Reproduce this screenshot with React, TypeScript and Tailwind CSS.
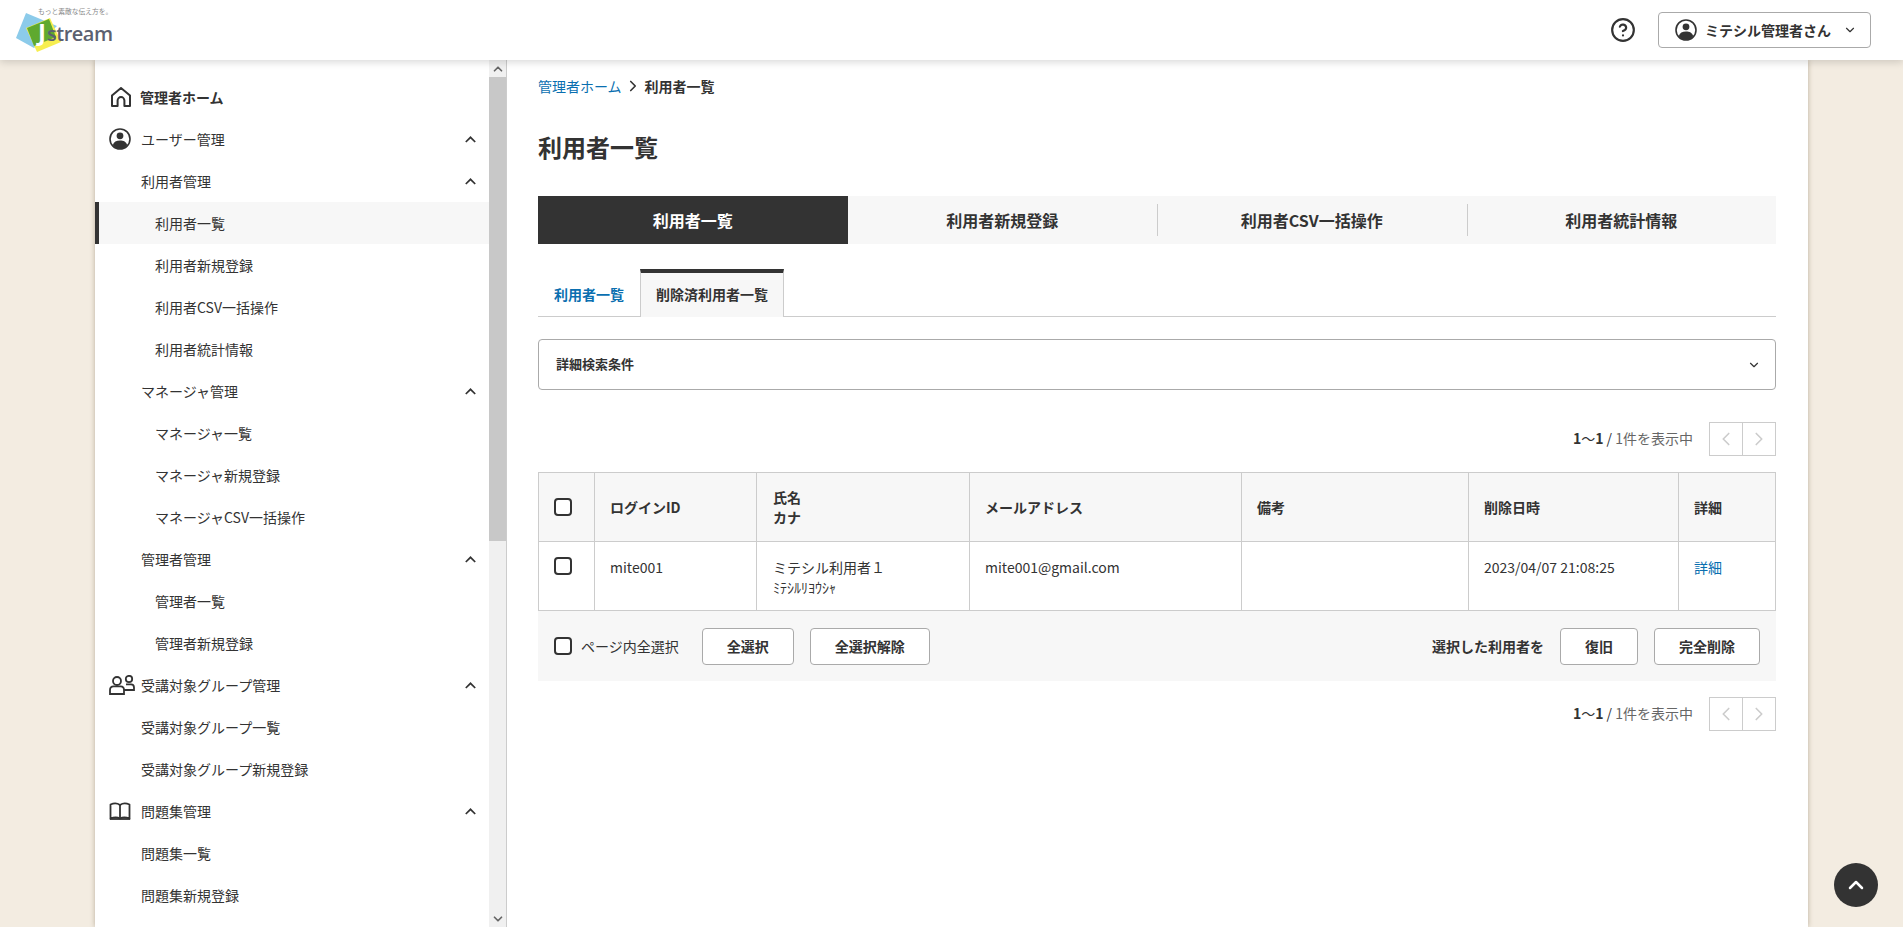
import { ChevronDown, ChevronLeft, ChevronRight, ChevronUp, CircleHelp } from "lucide-react";

type NavItem = {
  label: string;
  depth: 0 | 1 | 2;
  icon?: "home" | "user" | "group" | "book";
  bold?: boolean;
  open?: boolean;
  active?: boolean;
};

const navItems: NavItem[] = [
  { label: "管理者ホーム", depth: 0, icon: "home", bold: true },
  { label: "ユーザー管理", depth: 0, icon: "user", open: true },
  { label: "利用者管理", depth: 1, open: true },
  { label: "利用者一覧", depth: 2, active: true },
  { label: "利用者新規登録", depth: 2 },
  { label: "利用者CSV一括操作", depth: 2 },
  { label: "利用者統計情報", depth: 2 },
  { label: "マネージャ管理", depth: 1, open: true },
  { label: "マネージャ一覧", depth: 2 },
  { label: "マネージャ新規登録", depth: 2 },
  { label: "マネージャCSV一括操作", depth: 2 },
  { label: "管理者管理", depth: 1, open: true },
  { label: "管理者一覧", depth: 2 },
  { label: "管理者新規登録", depth: 2 },
  { label: "受講対象グループ管理", depth: 0, icon: "group", open: true },
  { label: "受講対象グループ一覧", depth: 1 },
  { label: "受講対象グループ新規登録", depth: 1 },
  { label: "問題集管理", depth: 0, icon: "book", open: true },
  { label: "問題集一覧", depth: 1 },
  { label: "問題集新規登録", depth: 1 },
];

const topTabs = ["利用者一覧", "利用者新規登録", "利用者CSV一括操作", "利用者統計情報"];

function UserIcon() {
  return (
    <svg width="22" height="22" viewBox="0 0 22 22" fill="none">
      <circle cx="11" cy="11" r="10" stroke="#333" strokeWidth="1.6" />
      <circle cx="11" cy="7.800" r="3.400" fill="#333" />
      <path d="M3.800 17.200C4.600 14 7.500 12.600 11 12.600s6.400 1.400 7.200 4.600A10 10 0 0 1 11 21a10 10 0 0 1-7.200-3.800Z" fill="#333" />
    </svg>
  );
}

function NavIcon({ icon }: { icon: NavItem["icon"] }) {
  if (icon === "home") {
    return (
      <svg width="20" height="20" viewBox="0 0 20 20" fill="none" className="ml-[2px]">
        <path
          d="M1 8.500 10 1l9 7.500V19h-5.600v-5.500a3.400 3.400 0 0 0-6.800 0V19H1Z"
          stroke="#333"
          strokeWidth="2"
          strokeLinejoin="round"
        />
      </svg>
    );
  }
  if (icon === "user") return <UserIcon />;
  if (icon === "group") {
    return (
      <svg width="26" height="20" viewBox="0 0 26 20" fill="none" stroke="#333" strokeWidth="1.800">
        <circle cx="8" cy="6" r="4" />
        <circle cx="20" cy="4" r="3.200" />
        <path d="M1 19v-4c0-2.400 1.600-3.600 3.600-3.600h7c2 0 3.400 1.200 3.400 3.600v4Z" />
        <path d="M15 15h10v-2.500c0-2-1.400-3.100-3-3.100h-5" />
      </svg>
    );
  }
  if (icon === "book") {
    return (
      <svg width="22" height="18" viewBox="0 0 22 18" fill="none" stroke="#333" strokeWidth="1.800" strokeLinejoin="round">
        <path d="M1.500 16.500V2.500C5 1 8.500 1.200 11 3c2.500-1.800 6-2 9.500-.5v14c-3.500-1.400-7-1.400-9.500 0-2.500-1.400-6-1.400-9.500 0Z" />
        <path d="M11 3v13.500" />
        <path d="M.8 17h20.400" />
      </svg>
    );
  }
  return null;
}

function SmallChevronUp() {
  return (
    <svg width="11" height="7" viewBox="0 0 11 7" fill="none">
      <path d="M.8 6 5.500 1.300 10.200 6" stroke="#333" strokeWidth="1.700" />
    </svg>
  );
}

function Logo() {
  return (
    <div className="relative h-[60px] w-[130px] shrink-0">
      <svg width="70" height="60" viewBox="0 0 70 60" className="absolute left-0 top-0">
        <polygon points="26,13 57,26 34,48 16,38" fill="#8ccbea" />
        <polygon points="50,18 61,42 37,52 26,28" fill="#f7ee4f" />
        <polygon points="27,28 49,19 56,37 34,46" fill="#5fa92f" />
      </svg>
      <span className="absolute left-[38px] top-[9px] origin-top-left scale-75 whitespace-nowrap text-[9px] leading-[8px] text-[#888]">
        もっと素敵な伝え方を。
      </span>
      <span className="absolute left-[38px] top-[17px] font-['Open_Sans',sans-serif] text-[24px] font-bold leading-[30px] text-white">
        J
      </span>
      <span className="absolute left-[47px] top-[19px] font-['Open_Sans',sans-serif] text-[20px] font-semibold leading-[30px] tracking-[-0.5px] text-[#5b6070]">
        stream
      </span>
    </div>
  );
}

function Pagination() {
  return (
    <div className="flex h-[34px] items-center justify-end">
      <p className="mr-4 pb-[2px] text-sm text-[#666]">
        <span className="font-bold text-[#333]">
          1<span className="font-normal">〜</span>1
        </span>{" "}
        <span className="text-[#333]">/</span> 1件を表示中
      </p>
      <div className="flex h-[34px] border border-[#ccc]">
        <span className="flex w-[33px] items-center justify-center border-r border-[#ccc]">
          <ChevronLeft size={22} strokeWidth={1.800} className="text-[#ccc]" />
        </span>
        <span className="flex w-[32px] items-center justify-center">
          <ChevronRight size={22} strokeWidth={1.800} className="text-[#ccc]" />
        </span>
      </div>
    </div>
  );
}

function Checkbox() {
  return (
    <input
      type="checkbox"
      className="block h-[18px] w-[18px] appearance-none rounded-[4px] border-2 border-[#333] bg-white"
    />
  );
}

function ActionButton({ children }: { children: string }) {
  return (
    <button
      type="button"
      className="h-[37px] rounded-[4px] border border-[#aaa] bg-white px-6 text-sm font-bold text-[#333]"
    >
      {children}
    </button>
  );
}

export default function App() {
  return (
    <div className="flex h-screen flex-col overflow-hidden bg-[#f3ece1] font-['Noto_Sans_CJK_JP','Noto_Sans',sans-serif] text-sm text-[#333]">
      <header className="relative z-10 flex h-[60px] shrink-0 items-center justify-between bg-white pr-[32px] shadow-[0_2px_8px_rgba(0,0,0,0.16)]">
        <Logo />
        <div className="flex items-center">
          <CircleHelp size={26} strokeWidth={2} className="mr-[22px] text-[#333]" />
          <button
            type="button"
            className="flex h-[36px] w-[213px] items-center rounded-[4px] border border-[#aaa] bg-white pl-[16px] text-sm font-bold"
          >
            <UserIcon />
            <span className="ml-[8px]">ミテシル管理者さん</span>
            <ChevronDown size={14} strokeWidth={2} className="ml-[12px]" />
          </button>
        </div>
      </header>

      <div className="relative mx-auto flex min-h-0 w-[1713px] flex-1 bg-white shadow-[0_0_5px_rgba(80,60,30,0.35)]">
        <aside className="flex w-[412px] shrink-0 border-r border-[#ccc]">
          <nav className="min-w-0 flex-1 overflow-hidden pt-4">
            {navItems.map((item) => (
              <a
                key={item.label}
                href="#"
                className={`flex h-[42px] items-center pr-[13px] ${item.active ? "border-l-4 border-[#333] bg-[#f7f7f7] pl-[56px]" : ""} ${
                  !item.active && item.depth === 2 ? "pl-[60px]" : ""
                } ${!item.active && item.depth === 1 ? "pl-[46px]" : ""} ${item.depth === 0 ? "pl-[14px]" : ""}`}
              >
                {item.icon && (
                  <span className={`flex shrink-0 items-center ${item.icon === "home" ? "w-[31px]" : "w-[32px]"}`}>
                    <NavIcon icon={item.icon} />
                  </span>
                )}
                <span className={`flex-1 ${item.bold ? "font-bold" : ""}`}>{item.label}</span>
                {item.open && <SmallChevronUp />}
              </a>
            ))}
          </nav>
          <div className="flex w-[17px] shrink-0 flex-col bg-[#f0f0f0]">
            <div className="flex h-[17px] items-center justify-center bg-[#f1f1f1]">
              <ChevronUp size={14} strokeWidth={3} className="text-[#666]" />
            </div>
            <div className="h-[464px] bg-[#c8c8c8]" />
            <div className="flex-1" />
            <div className="flex h-[17px] items-center justify-center">
              <ChevronDown size={14} strokeWidth={3} className="text-[#666]" />
            </div>
          </div>
        </aside>

        <main className="min-w-0 flex-1 pl-[31px] pr-[32px] pt-4">
          <nav className="flex h-5 items-center text-sm">
            <a href="#" className="text-[#0a6fb0]">
              管理者ホーム
            </a>
            <ChevronRight size={18} strokeWidth={2.200} className="ml-[2px] mr-[3px]" />
            <span className="font-bold">利用者一覧</span>
          </nav>

          <h1 className="mt-[33px] text-2xl font-bold leading-9">利用者一覧</h1>

          <div className="mt-[31px] grid h-12 grid-cols-4 bg-[#f7f7f7]">
            {topTabs.map((tab, index) => (
              <div
                key={tab}
                className={`flex items-center justify-center text-base font-bold ${
                  index === 0 ? "bg-[#333] text-white" : ""
                } ${index > 1 ? "relative" : ""}`}
              >
                {index > 1 && <span className="absolute left-0 top-2 h-8 w-px bg-[#ccc]" />}
                {tab}
              </div>
            ))}
          </div>

          <div className="mt-[25px] flex h-12 border-b border-[#ccc]">
            <a href="#" className="flex w-[102px] items-center justify-center pt-[2px] font-bold text-[#0a6fb0]">
              利用者一覧
            </a>
            <div className="-mb-px flex w-[144px] items-center justify-center border-x border-t-4 border-[#ccc] border-t-[#333] bg-[#f7f7f7] pb-[2px] font-bold">
              削除済利用者一覧
            </div>
          </div>

          <div className="mt-[22px] flex h-[51px] items-center justify-between rounded-[4px] border border-[#aaa] pl-[17px] pr-[14px] text-[13px] font-bold">
            詳細検索条件
            <ChevronDown size={14} strokeWidth={2} />
          </div>

          <div className="mt-[32px]">
            <Pagination />
          </div>

          <table className="mt-4 w-full table-fixed border-collapse border border-[#ccc]">
            <colgroup>
              <col className="w-[56px]" />
              <col className="w-[162px]" />
              <col className="w-[213px]" />
              <col className="w-[272px]" />
              <col className="w-[227px]" />
              <col className="w-[210px]" />
              <col />
            </colgroup>
            <thead>
              <tr className="h-[69px] bg-[#f7f7f7] text-left">
                <th className="border border-[#ccc] px-[15px] align-middle">
                  <Checkbox />
                </th>
                <th className="border border-[#ccc] px-[15px]">ログインID</th>
                <th className="border border-[#ccc] px-[16px] leading-[20px]">
                  氏名
                  <br />
                  カナ
                </th>
                <th className="border border-[#ccc] px-[15px]">メールアドレス</th>
                <th className="border border-[#ccc] px-[15px]">備考</th>
                <th className="border border-[#ccc] px-[15px]">削除日時</th>
                <th className="border border-[#ccc] px-[15px]">詳細</th>
              </tr>
            </thead>
            <tbody>
              <tr className="h-[69px] align-top">
                <td className="border border-[#ccc] px-[15px] pt-[15px]">
                  <Checkbox />
                </td>
                <td className="border border-[#ccc] px-[15px] pt-[15px]">mite001</td>
                <td className="border border-[#ccc] px-[16px] pt-[15px]">
                  ミテシル利用者１
                  <br />
                  <span className="text-[14px] leading-[18px]">ﾐﾃｼﾙﾘﾖｳｼｬ</span>
                </td>
                <td className="border border-[#ccc] px-[15px] pt-[15px]">mite001@gmail.com</td>
                <td className="border border-[#ccc] px-[15px] pt-[15px]" />
                <td className="border border-[#ccc] px-[15px] pt-[15px]">2023/04/07 21:08:25</td>
                <td className="border border-[#ccc] px-[15px] pt-[15px]">
                  <a href="#" className="text-[#0a6fb0]">
                    詳細
                  </a>
                </td>
              </tr>
            </tbody>
          </table>

          <div className="flex h-[70px] items-center bg-[#f7f7f7] px-4">
            <Checkbox />
            <span className="ml-[9px]">ページ内全選択</span>
            <div className="ml-[23px] flex gap-4">
              <ActionButton>全選択</ActionButton>
              <ActionButton>全選択解除</ActionButton>
            </div>
            <span className="ml-auto mr-4 font-bold">選択した利用者を</span>
            <div className="flex gap-4">
              <ActionButton>復旧</ActionButton>
              <ActionButton>完全削除</ActionButton>
            </div>
          </div>

          <div className="mt-4">
            <Pagination />
          </div>
        </main>

        <button
          type="button"
          className="absolute bottom-[20px] right-[-70px] flex h-[44px] w-[44px] items-center justify-center rounded-full bg-[#333] text-white"
        >
          <ChevronUp size={24} strokeWidth={2.500} />
        </button>
      </div>
    </div>
  );
}
